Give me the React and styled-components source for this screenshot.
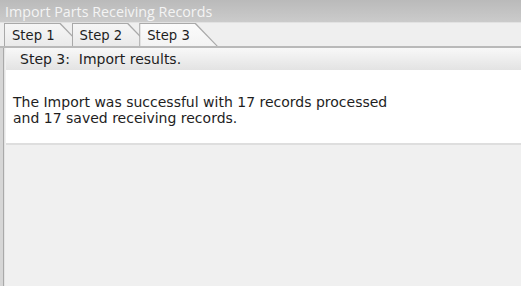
import React from "react"
import styled, { createGlobalStyle } from "styled-components"

const Global = createGlobalStyle`
  html, body { margin: 0; padding: 0; }
  body {
    width: 521px;
    height: 286px;
    overflow: hidden;
    background: #f0f0f0;
    font-family: "DejaVu Sans", Verdana, sans-serif;
  }
`

const Window = styled.div`
  width: 521px;
  height: 286px;
  display: flex;
  flex-direction: column;
  background: #f0f0f0;
`

const TitleBar = styled.div`
  height: 22px;
  flex: none;
  display: flex;
  align-items: center;
  padding-left: 5px;
  background: linear-gradient(#bababa, #cbcbcb);
  border-bottom: 1px solid #e2e2e2;
  color: #f4f4f4;
  font-family: "Open Sans", "Noto Sans", sans-serif;
  font-size: 14.3px;
`

const TabStrip = styled.div`
  height: 23px;
  flex: none;
  display: flex;
  align-items: flex-end;
  padding-left: 4px;
  background: #efefef;
  border-bottom: 2px solid #b9b9b9;
`

const Tab = styled.div`
  position: relative;
  height: 23px;
  margin-right: -11px;
  padding: 0 28px 0 8px;
  display: flex;
  align-items: center;
  font-size: 13.2px;
  color: #1e1e1e;
  z-index: ${p => (p.$active ? 3 : p.$index)};
  background: #a9a9a9;
  clip-path: polygon(0 0, calc(100% - 22px) 0, 100% 100%, 0 100%);

  &::before {
    content: "";
    position: absolute;
    inset: 1px 0 0 1px;
    background: ${p =>
      p.$active
        ? "linear-gradient(#fbfbfb, #f3f3f3)"
        : "linear-gradient(#f6f6f6, #eaeaea)"};
    clip-path: polygon(0 0, calc(100% - 23px) 0, calc(100% - 1.5px) 100%, 0 100%);
  }

  span {
    position: relative;
    padding-top: 2px;
  }
`

const Body = styled.div`
  flex: 1;
  display: flex;
  flex-direction: column;
  border-left: 3px solid #d6d6d6;
  box-shadow: inset 1px 0 0 #a9a9a9, inset 2px 0 0 #e4e4e4;
  padding-left: 3px;
`

const StepHeader = styled.div`
  height: 22px;
  display: flex;
  align-items: center;
  padding-left: 14px;
  background: linear-gradient(#f8f8f8, #e3e3e3);
  font-size: 14px;
  color: #1e1e1e;
`

const ResultPanel = styled.div`
  height: 75px;
  box-sizing: border-box;
  padding: 24px 0 0 7px;
  background: #fff;
  border-bottom: 2px solid #dedede;
  font-size: 14px;
  line-height: 16px;
  color: #1e1e1e;
`

const tabs = ["Step 1", "Step 2", "Step 3"]

export default function App() {
  return (
    <Window>
      <Global />
      <TitleBar>Import Parts Receiving Records</TitleBar>
      <TabStrip>
        {tabs.map((t, i) => (
          <Tab key={t} $index={i + 1} $active={i === 2}>
            <span>{t}</span>
          </Tab>
        ))}
      </TabStrip>
      <Body>
        <StepHeader>Step 3:&nbsp; Import results.</StepHeader>
        <ResultPanel>
          The Import was successful with 17 records processed
          <br />
          and 17 saved receiving records.
        </ResultPanel>
      </Body>
    </Window>
  )
}
